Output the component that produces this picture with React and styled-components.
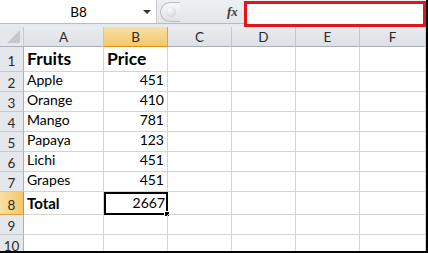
import styled, { createGlobalStyle, css } from "styled-components";

const GlobalStyle = createGlobalStyle`
    html, body {
        margin: 0;
        padding: 0;
        background: #ffffff;
    }
    * {
        box-sizing: border-box;
    }
`;

const COLUMNS = ["A", "B", "C", "D", "E", "F"];
const COL_WIDTHS = [24, 80, 64, 64, 64, 64, 66];
const ROW_HEIGHTS = [20, 25, 20, 20, 20, 20, 20, 20, 23, 20, 20];

const dados = [
    { fruta: "Fruits", preco: "Price", header: true },
    { fruta: "Apple", preco: "451" },
    { fruta: "Orange", preco: "410" },
    { fruta: "Mango", preco: "781" },
    { fruta: "Papaya", preco: "123" },
    { fruta: "Lichi", preco: "451" },
    { fruta: "Grapes", preco: "451" },
    { fruta: "Total", preco: "2667", total: true },
    { fruta: "", preco: "" },
    { fruta: "", preco: "" },
];

export default function App() {
    return (
        <>
            <GlobalStyle />
            <Frame>
                <TopBar>
                    <BarRow>
                        <NameBox>
                            <NameText>B8</NameText>
                            <DropArrow />
                        </NameBox>
                        <Splitter>
                            <SplitterKnob />
                        </Splitter>
                        <FxLabel>fx</FxLabel>
                    </BarRow>
                    <Annotation />
                </TopBar>

                <Grid>
                    <Corner>
                        <CornerTriangle />
                    </Corner>
                    {COLUMNS.map((c) => (
                        <ColHeader key={c} $selected={c === "B"}>{c}</ColHeader>
                    ))}

                    {dados.map((linha, i) => {
                        const num = i + 1;
                        return [
                            <RowHeader key={`h${num}`} $selected={num === 8}>{num}</RowHeader>,
                            <Cell key={`a${num}`} $bold={linha.header || linha.total} $big={linha.header}>
                                {linha.fruta}
                            </Cell>,
                            <Cell
                                key={`b${num}`}
                                $bold={linha.header}
                                $big={linha.header}
                                $right={!linha.header}
                                $active={linha.total}
                            >
                                {linha.preco}
                                {linha.total && <FillHandle />}
                            </Cell>,
                            <Cell key={`c${num}`} />,
                            <Cell key={`d${num}`} />,
                            <Cell key={`e${num}`} />,
                            <Cell key={`f${num}`} />,
                        ];
                    })}
                </Grid>
            </Frame>
        </>
    );
}

const Frame = styled.div`
    width: 428px;
    height: 253px;
    overflow: hidden;

    border-right: 2px solid #000000;
    border-bottom: 2px solid #000000;

    background: #ffffff;
    font-family: Lato, "Liberation Sans", sans-serif;
`;

const TopBar = styled.div`
    position: relative;
    height: 27px;

    background: #e6e9ed;
`;

const BarRow = styled.div`
    height: 24px;

    display: flex;
    align-items: center;

    background: linear-gradient(#eef0f3, #e3e6ea);
    border-bottom: 1px solid #b7bcc3;
`;

const NameBox = styled.div`
    width: 157px;
    height: 23px;

    display: flex;
    align-items: center;

    background: #ffffff;
    border-right: 1px solid #c9cdd3;
`;

const NameText = styled.span`
    flex: 1;
    padding-left: 14px;

    text-align: center;
    font-size: 13.5px;
    color: #000000;
`;

const DropArrow = styled.span`
    width: 0;
    height: 0;
    margin-right: 5px;

    border-left: 4px solid transparent;
    border-right: 4px solid transparent;
    border-top: 4px solid #333333;
`;

const Splitter = styled.div`
    width: 20px;
    height: 20px;
    margin-left: 3px;

    display: flex;
    align-items: center;
    justify-content: center;

    border: 1px solid #b9bec5;
    border-radius: 10px 0 0 10px;
    border-right: none;
    background: linear-gradient(#f7f8f9, #dfe2e6);
`;

const SplitterKnob = styled.span`
    width: 10px;
    height: 10px;
    border-radius: 50%;

    background: radial-gradient(circle at 40% 35%, #ffffff, #c4c8cd);
`;

const FxLabel = styled.span`
    margin-left: 47px;

    font-family: "Liberation Serif", serif;
    font-style: italic;
    font-weight: bold;
    font-size: 13px;
    color: #3c3c3c;
`;

const Annotation = styled.div`
    position: absolute;
    left: 244px;
    top: 1px;
    width: 182px;
    height: 26px;

    background: #ffffff;
    border: 3px solid #e3141c;
`;

const Grid = styled.div`
    display: grid;
    grid-template-columns: ${COL_WIDTHS.map((w) => `${w}px`).join(" ")};
    grid-template-rows: ${ROW_HEIGHTS.map((h) => `${h}px`).join(" ")};
`;

const headerBase = css`
    display: flex;
    align-items: center;
    justify-content: center;

    font-size: 13.5px;
    color: #2b2b2b;
`;

const Corner = styled.div`
    position: relative;

    background: #e4e7eb;
    border-right: 1px solid #c5cad1;
    border-bottom: 1px solid #a9b0b9;
`;

const CornerTriangle = styled.span`
    position: absolute;
    right: 3px;
    bottom: 3px;

    width: 0;
    height: 0;

    border-left: 13px solid transparent;
    border-bottom: 13px solid #c4c8ce;
`;

const ColHeader = styled.div`
    ${headerBase};

    background: ${(p) => (p.$selected ? "linear-gradient(#f9dfa6, #f4c866)" : "linear-gradient(#e9ecef, #dde1e6)")};
    border-right: 1px solid ${(p) => (p.$selected ? "#e5a33e" : "#c3c8cf")};
    border-bottom: 1px solid ${(p) => (p.$selected ? "#e08c1f" : "#a9b0b9")};
`;

const RowHeader = styled.div`
    ${headerBase};
    padding-top: 3px;

    background: ${(p) => (p.$selected ? "linear-gradient(90deg, #f9dfa6, #f4c866)" : "#e4e7eb")};
    border-right: 1px solid ${(p) => (p.$selected ? "#e08c1f" : "#a9b0b9")};
    border-bottom: 1px solid ${(p) => (p.$selected ? "#e5a33e" : "#c5cad1")};
`;

const Cell = styled.div`
    position: relative;
    padding: 0 3px 2px 3px;

    display: flex;
    align-items: flex-end;
    justify-content: ${(p) => (p.$right ? "flex-end" : "flex-start")};

    font-size: ${(p) => (p.$big ? "17.5px" : p.$bold ? "15px" : "14px")};
    font-weight: ${(p) => (p.$bold ? 700 : 400)};
    line-height: 1.2;
    color: #000000;
    white-space: nowrap;

    border-right: 1px solid #d4d4d4;
    border-bottom: 1px solid #d4d4d4;

    ${(p) =>
        p.$active &&
        css`
            border: 2px solid #000000;
            padding: 0 1px 1px 3px;
        `}
`;

const FillHandle = styled.span`
    position: absolute;
    right: -4px;
    bottom: -4px;

    width: 6px;
    height: 6px;

    background: #000000;
    border: 1px solid #ffffff;
`;
